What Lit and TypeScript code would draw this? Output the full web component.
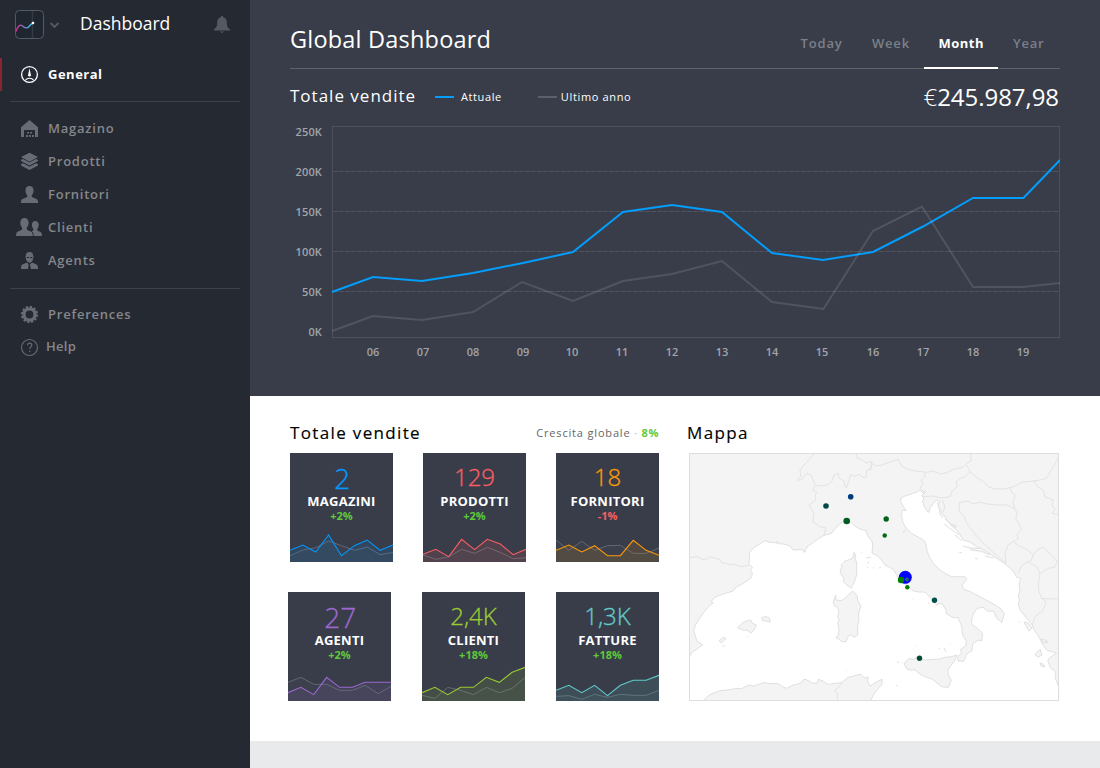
import { LitElement, html, css, svg } from "lit";
import { customElement, property } from "lit/decorators.js";

const ICONS: Record<string, unknown> = {
  general: svg`<circle cx="14.5" cy="9.5" r="7.9" fill="none" stroke="#fff" stroke-width="1.3"/>
    <path d="M14.5 3.2l1.3 6.3a1.4 1.4 0 1 1-2.6 0z" fill="#fff"/>
    <path d="M10.4 15.2c.9-1.3 2.2-2 4.1-2s3.200.7 4.100 2" fill="none" stroke="#fff" stroke-width="1.1"/>`,
  store: svg`<path d="M14.5 1L23 8.300V18H20V11H9V18H6V8.300z"/>
    <path d="M12 13h2v1.600h-2zM15 13h2v1.600h-2zM11 16h2v2h-2zM14 16h1.800v2H14zM17 16h1.800v2H17z"/>`,
  layers: svg`<path d="M14.500.8L23 5.100 14.500 9.800 6 5.100z"/>
    <path d="M6 8l2-1 6.500 3.600L21 7l2 1v1l-8.500 4.600L6 9zM6 12.200l2-1 6.500 3.500 6.500-3.500 2 1v1.200L14.500 18 6 13.400z"/>`,
  person: svg`<path d="M14.500 1c2.700 0 4.200 1.900 4 4.700-.1 2-.8 3.500-1.800 4.500v1.600c.6 1 5.200 1.700 5.900 3.300.4.900.5 1.900.5 2.900H5.900c0-1 .1-2 .5-2.900.7-1.600 5.300-2.300 5.900-3.300v-1.600c-1-1-1.700-2.500-1.800-4.500C10.300 2.900 11.800 1 14.500 1z"/>`,
  people: svg`<path d="M9.500 0c2.800 0 4.300 2 4.100 5-.1 2.100-.8 3.600-1.800 4.700v1.700c.6 1 4.800 1.700 5.500 3.400.4.900.5 2 .5 3.200H1c0-1.200.1-2.300.5-3.200.7-1.700 5-2.400 5.600-3.400V9.700c-1-1.100-1.700-2.600-1.800-4.700C5.200 2 6.700 0 9.500 0z"/>
    <path d="M20.300 3c2.300 0 3.500 1.700 3.400 4-.1 1.700-.7 3-1.500 3.900v1.400c.5.8 3.700 1.300 4.300 2.700.4.800.5 2 .5 3h-8.300c0-2.300-.3-3.700-2.100-4.700 1-.4 1.600-.7 1.800-1v-1.400c-.8-.9-1.400-2.200-1.500-3.900-.1-2.300 1.100-4 3.400-4z"/>`,
  agent: svg`<path d="M14.500 1c2.600 0 3.800 1.600 3.700 4l.4.500-.5 2c-.3 1.700-1 2.900-2 3.700l-1.600.9-1.600-.9c-1-.8-1.700-2-2-3.700l-.5-2 .4-.5C10.700 2.600 11.900 1 14.500 1z"/>
    <path d="M12 11.500l2.500 2.500 2.500-2.500c.7.700 4.900 1.500 5.600 3.200.3.900.4 2.300.4 3.300h-7l-.8-3.500h-1.400L13 18H6c0-1 .1-2.400.4-3.300.7-1.700 4.900-2.500 5.600-3.200z"/>
    <path d="M11.600 6h2.400v1.100h-2.100zM15 6h2.400l-.3 1.100H15zM13 11.300h1l.8 3.200-.8 2.500z" fill="#252932"/>`,
  gear: svg`<circle cx="14.500" cy="9.500" r="5.600" fill="none" stroke="currentColor" stroke-width="3.400"/>
    <circle cx="14.500" cy="9.500" r="7.700" fill="none" stroke="currentColor" stroke-width="1.900" stroke-dasharray="2.300 1.731"/>`,
  help: svg`<circle cx="14.500" cy="9.500" r="8" fill="none" stroke="currentColor" stroke-width="1.100"/>
    <path d="M12.600 7.300c.1-1.400.9-2.100 2.100-2.100 1.300 0 2.100.8 2.100 1.900 0 1.700-2.100 1.800-2.100 4M14.700 12.800v1.300" fill="none" stroke="currentColor" stroke-width="1.200"/>`,
};

const line = (pts: number[][]) => pts.map((p) => p.join(",")).join(" ");

@customElement("nav-item")
class NavItem extends LitElement {
  @property() icon = "";
  @property() label = "";
  @property({ type: Boolean, reflect: true }) active = false;
  static styles = css`
    :host { display: flex; align-items: center; height: 33px; padding-left: 15px; box-sizing: border-box;
      color: #86878a; font-weight: 600; font-size: 13px; letter-spacing: 0.77px; border-left: 0 solid #8a2431; }
    :host([active]) { color: #fff; border-left-width: 2px; padding-left: 13px; font-weight: 700; letter-spacing: 0.5px; }
    svg { width: 28px; height: 19px; margin-right: 5px; color: #686c76; fill: currentColor; flex: none; }
    span { line-height: 32px; margin-top: -1px; }
    :host(.tight) svg { margin: 2px 3px 0 0; }
    :host(.tight) span { letter-spacing: 0.3px; }
  `;
  render() {
    return html`<svg viewBox="0 0 28 19">${ICONS[this.icon]}</svg><span>${this.label}</span>`;
  }
}

@customElement("stat-card")
class StatCard extends LitElement {
  @property() value = "";
  @property() label = "";
  @property() delta = "";
  @property() color = "";
  @property({ attribute: false }) now: number[] = [];
  @property({ attribute: false }) before: number[] = [];
  static styles = css`
    :host { display: flex; flex-direction: column; width: 103px; height: 109px; background: #383d49; text-align: center; color: #fff; }
    .value { height: 32px; line-height: 32px; padding-top: 8px; font-size: 24px; font-weight: 300; -webkit-text-stroke: 0.3px currentColor; }
    .value.big { font-size: 28px; line-height: 34px; padding-left: 1.500px; }
    .label { height: 16px; line-height: 16px; font-size: 13px; font-weight: 700; letter-spacing: 0.25px; }
    .delta { height: 14px; line-height: 14px; font-size: 11px; font-weight: 700; color: #5fc93a; }
    .delta.down { color: #fb5f64; }
    svg { display: block; width: 103px; height: 34px; margin-top: auto; }
  `;
  render() {
    const at = (v: number[]) => v.map((h, i) => [+(i * 38.625).toFixed(1), 102 - h]);
    return html`
      <div class="value ${this.value.includes("2") && this.value.length < 3 ? "big" : ""}" style="color:${this.color}">${this.value}</div>
      <div class="label">${this.label}</div>
      <div class="delta ${this.delta.startsWith("-") ? "down" : ""}">${this.delta}</div>
      <svg viewBox="0 0 309 102">
        <polygon points="${line([[0, 102], ...at(this.before), [309, 102]])}" fill="#fff" fill-opacity="0.02"/>
        <polyline points=${line(at(this.before))} fill="none" stroke="#626772" stroke-width="3"/>
        <polygon points="${line([[0, 102], ...at(this.now), [309, 102]])}" fill=${this.color} fill-opacity="0.12"/>
        <polyline points=${line(at(this.now))} fill="none" stroke=${this.color} stroke-width="3.2"/>
      </svg>`;
  }
}

@customElement("sales-chart")
class SalesChart extends LitElement {
  static styles = css`
    :host { display: block; }
    svg { display: block; width: 770px; height: 250px; }
    text { font-size: 11px; font-weight: 600; fill: #a2a5ab; }
    .amount { letter-spacing: 0.15px; }
    .grid { stroke: #4e535e; stroke-dasharray: 5 1; }
    .frame { fill: none; stroke: #4c515c; }
    .now, .before { fill: none; stroke-width: 2; }
    .now { stroke: #039dfc; }
    .before { stroke: #fff; stroke-opacity: 0.12; }
  `;
  render() {
    const now = [[332, 292], [373, 277], [422, 281], [473, 273], [523, 263], [573, 252], [623, 212], [672, 205], [722, 212], [772, 253], [823, 260], [873, 252], [923, 226.500], [973, 198], [1023.500, 198], [1060, 160]];
    const before = [[332, 331], [373, 316], [422, 320], [473, 312], [522, 282], [573, 301], [623, 281], [672, 274], [722, 261], [772, 302], [823.500, 309], [873, 231], [922, 206.500], [973, 287], [1023, 287], [1060, 283]];
    return html`<svg viewBox="290 116 770 250">
      <rect class="frame" x="332.500" y="126.500" width="727" height="211"/>
      ${[171.5, 211.5, 251.5, 291.5].map((y) => svg`<line class="grid" x1="333" x2="1059" y1=${y} y2=${y}/>`)}
      ${["250K", "200K", "150K", "100K", "50K", "0K"].map((t, i) => svg`<text class="amount" x="322" y=${136 + i * 40} text-anchor="end">${t}</text>`)}
      ${[373, 423, 473, 523, 572, 622, 672, 722, 772, 822, 873, 923, 973, 1023].map((x, i) => svg`<text x=${x} y="356" text-anchor="middle">${String(i + 6).padStart(2, "0")}</text>`)}
      <polyline class="now" points=${line(now)}/>
      <polyline class="before" points=${line(before)}/>
    </svg>`;
  }
}

const MAINLAND = `M680 440V662L690 656 691.700 652.300 697 649 702.700 644.700 698 642 696.700 640 695 635 693.700 630 696 624 700 617.700 705 611 709.300 605.700 713.300 603 711 601.700 715 597 723 594 733.300 591 736.700 586.700 744 583 751.700 577.300 752.300 573.300 750.300 570 752.700 567.700 749 564 749.700 552.300 754 547.300 760 544 765 540.700 770 542.500 775 542.300 776.700 544 777.300 541 778.700 543.700 784 544 790 546 792 549 795 550 801 549.500 805 550.700 808 546 811.700 543.700 818 539 824 535.300 831.700 533.300 835 529 838.300 525 843.300 521.700 850.700 522.300 855 526.300 860 529 866 530.700 868.300 536.700 872 541 872.700 545 872 553.300 876 555 880 558.300 885 565 893.300 569.300 896 574 900 580 905 584 909.300 586.700 913.300 591 919 592 925 592 928 595 931 598.300 936.700 605.300 939 603 942.700 604.300 946 610 946 613.500 953.300 617.700 958.300 617.700 960 622 961.700 626.700 962.700 635 966.300 641 965.700 646 960.700 649.300 961.300 653.300 957.700 657.300 958 661 963.700 661.300 966.700 654 972 650.700 972.700 644 978.300 640 981.700 641 982.700 633.300 977 628 971.700 624.300 971.700 618.300 974 613 977.300 608.300 983.300 607.300 986.700 611 994 611.300 996.700 618.300 1001.700 622.300 1004.300 614 1001 609 996.700 606 988 601 980 596.700 971 592 963.300 589 962 585 966.700 579.300 965 576.700 951.700 576.700 945 573.300 940 570 933.300 563.300 930 558 927.300 551.700 926 545 924.300 540.700 918 537 911.700 533.300 906 528 902.700 521.700 901.500 515 902.300 510 906 510.700 903 506 900.700 501.700 901 498 905 496 913.300 493.300 917 492 920 490 923 493 925 490.500 925 493.300 921.700 495 924 499 922.500 501 924.300 506.700 927 511 929 512.300 930 508 933.300 503.300 936.700 500 940 501.700 938 506 942 513 947 520 953.300 527.300 959 533 963.300 540 970 542 976.700 546.700 984 550 991.700 555 1003.300 562.700 1008.300 566.700 1014 572 1016.700 577.300 1020.700 578.300 1019 584 1020 590 1018.300 596 1019.500 600 1018.300 603.300 1020 610 1026.700 618.300 1032.300 625 1034 630 1036.700 633.300 1040 639 1043 645 1046.700 650 1056.700 653.300 1052 656 1047.700 660 1050 667.300 1055.300 671.700 1055.300 678 1058.300 686 1065 688V440z`;

const ISLANDS = [
  "M854 552.300L855.700 555 855 558.300 856.700 563 856.700 575 854.300 582 851 588.300 847 585 843.300 581.700 844 578 841.500 575 840 570 842 567 841 565 845 561 848 560 852.700 558.300z",
  "M852.700 591L857.300 596 857.500 600 861 606 858.500 613 859 620 857.500 627 857.700 635 854.300 637.300 850.700 635 848 636.500 846 641.700 841.700 641.700 839 639 835.700 637.700 838.300 635 839 630 837.700 623.300 839.300 620 837.500 617 839 612 837.700 607.300 834.500 606 833.300 602 835.700 595 836 600 841.700 600.700 845 598 848.300 595z",
  "M904.300 664L906 661 909.300 658.300 913 659.500 916.700 657.300 920 658 925 660 930 659.700 935 659.300 940 659 945 657.300 950 657 957.300 655 955 660 950 666.700 948 670 948.300 675 951.300 680 948.300 687.300 941.700 686.700 937 683 932 679 925 676.700 920 674 915 670 910 670 906.700 669z",
  "M737.700 627.700L743.300 622.300 747 621 751 620 752 623 756.300 625 754 630 750.700 633.300 747 630 744 630.500z",
  "M762 617.700L766 616.500 769.300 618 770.300 622 766 621 762.300 620.500z",
  "M719.300 640.700L723.300 637.300 726 638.500 723 641.500 720.700 642.700z",
  "M702 702L709.300 695 714 693 720 690.700 728 690 736 688.500 741.700 688.700 748.300 685 754 686 763.300 682.700 771 683.500 778.300 683.700 783 687 786.700 688.300 793.300 685 800.700 683.300 803 680 805 679.300 809 681 811.700 682.700 817 683.500 818.300 679.300 823 681 828.300 684.500 834 683.500 841.700 682.700 848.300 677.300 854 676 860.700 674 864 678 868.300 677.300 867.500 681 870 686 877 681.500 882.300 679.300 881.700 685 877 690 873.300 695 870 702z",
  "M1024 622l4 1 4 5-3 3-3-5zM1041 639l4 1 3 2-5 1zM1037 652l3-3 2 6-4 2-3-2zM1040 663l3 1 2 3-4-1z",
  "M937 502l2 5 1 7 3 4M942 500l3 7-2 5M945 519l6 5 6 2M944 524l8 6 7 5M950 525l7 3M955 535l7 6M963 546l10 3 8-1M970 550l12 1 8 4M959 552l3 1M975 558l3 1M985 556l9 2",
  "M861 552l1 .500M866 558l5-1M867 563l2-.500M873 568l1 0M879 568l2-1M867 567l1 1M803 552l3-.500M903 532l2-2-1 2zM722 646h3M747 636.500h1M846 670.300h1M897 662l2 .500M902 662.500l1 .500M896 685l1.500 1M916 646h1M939 648.500h1M944 648l2 4M950 644h1M913 599h1M928 603l1.500.500M1019 622h1",
];

const BORDERS = [
  "M814 454L806 463 800 470 800.700 476.700 797.300 480 801 480 806.700 473.300 811 475 813 480 815 485 821 486 826.700 485 831.700 481.700 834 475 838.300 473.300 839 478 844 481 845 487 846.700 487.300 848 483 851 474.300 855 476.700 859 474 862 477 866 477.700 866.700 470 871 469 871.700 461.700 866 463 861 459 857 458.300 856 454",
  "M870 470.700L871.700 463.300 876 466 881.700 465 890 462 898.300 459.300 901.700 466 907 469 913.300 470.700 926.700 472.300 934 471 940 474 946.700 472.700 952 470 958.300 468.300 963 467 966.700 463.300 971 461 970.700 454",
  "M925 472.300L925 476 921 480 923 484 920 488 925 493M923 496.700L932 496 942 498 950 496.700 951.700 491.700 957.300 486.700 956 482 961 478 965 477 970 471.700 966.700 465",
  "M970 471.700L976 477 983.300 481.700 989 487 995 489 1003 489 1010 487.700 1015 486 1021.700 482.300 1033.300 481 1040 480 1046.700 478.300 1050 472 1053.300 466.700 1058.700 456.700",
  "M1033.300 481L1038 487 1043.300 490 1045 497 1053.300 500 1052 505 1055 510 1052 513 1059 515",
  "M1010 487.700L1012 493 1015 495 1013 503 1015 509",
  "M1005 553L1008 545 1013 541.700 1018.300 539 1017 534 1021.700 530 1019 524 1015.700 518.300 1017 513 1015 509 1007 505 996.700 505 988 504 980 502.300 973 504 968 501 959.300 502.700 959.300 511.700 964 516 966.700 523.300 975 534 983.300 543.300 994 553 1006 563.300z",
  "M1013.300 541.700L1019 546 1025 548.300 1033.300 555 1031 561 1025 563 1021.700 566 1018.300 573.300M1028.300 562.300L1036.700 566.700 1040 573.300 1038.300 583.300 1039 592 1041.700 598.300 1046 601.700 1043.300 610 1035 616.700 1032.300 625",
  "M1033.300 555L1038 549 1043.300 547.300 1049 553 1057.300 560.700 1055 567 1048.300 568.300 1040 573.300M1041.700 598.300L1050 599 1059 598.500",
  "M689 557.700L698.300 556.700 702 559 705 560 710 556.700 714 558 720 559.300 722 563 726.700 563.300 730 565 735 564 740 566.700 745 566 749 565",
  "M815 486L812.700 490 816.700 492.300 815 496 816 500 809.300 505 814 513.300 812.700 521.700 820 526.700 825.700 527.700 824 535.300",
  "M841.700 682.700L838 688 835 690 837.300 694 837.300 700",
];

@customElement("region-map")
class RegionMap extends LitElement {
  static styles = css`
    :host { display: block; box-sizing: border-box; width: 370px; height: 248px; border: 1px solid #dedede; }
    svg { display: block; width: 368px; height: 246px; }
    .land { fill: #f4f4f4; stroke: #e0e0e0; stroke-linejoin: round; }
    .border { fill: none; stroke: #e3e3e3; }
  `;
  render() {
    const pins: [number, number, number, string][] = [
      [826, 506, 2.8, "#004b46"], [850.700, 496.700, 2.800, "#003c7c"], [846.700, 521, 3.300, "#005c23"],
      [886.200, 519, 2.700, "#006214"], [884.700, 535.500, 2.200, "#006e10"], [905.300, 577.300, 6.500, "#0000ff"],
      [901, 580, 3.200, "#008000"], [907.300, 587.300, 2.200, "#007c00"], [934.500, 600.200, 2.700, "#004d4d"], [919.500, 658.200, 2.700, "#004d30"],
    ];
    return html`<svg viewBox="690 454 368 246">
      <path class="land" d=${MAINLAND}/>
      ${ISLANDS.map((d) => svg`<path class="land" d=${d}/>`)}
      ${BORDERS.map((d) => svg`<path class="border" d=${d}/>`)}
      ${pins.map(([x, y, r, c]) => svg`<circle cx=${x} cy=${y} r=${r} fill=${c}/>`)}
      <circle cx="907" cy="579.500" r="1.500" fill="#084c8c" stroke="#3c8c50" stroke-width="0.800"/>
    </svg>`;
  }
}

const CARDS = [
  [
    { v: "2", l: "MAGAZINI", d: "+2%", c: "#0398fc", now: [35, 51, 30, 81, 19, 49, 66, 35, 51], before: [19, 36, 43, 63, 49, 35, 45, 22, 29] },
    { v: "129", l: "PRODOTTI", d: "+2%", c: "#fb5f64", now: [23, 38, 16, 68, 37, 68, 54, 22, 38], before: [21, 8, 16, 38, 26, 44, 29, 10, 13] },
    { v: "18", l: "FORNITORI", d: "-1%", c: "#fc9a06", now: [35, 51, 30, 49, 19, 19, 65, 35, 20], before: [66, 35, 62, 35, 49, 50, 26, 26, 42] },
  ],
  [
    { v: "27", l: "AGENTI", d: "+2%", c: "#9c68d0", now: [25, 41, 19, 71, 41, 41, 56, 56, 56], before: [56, 71, 50, 50, 32, 32, 47, 22, 44] },
    { v: "2,4K", l: "CLIENTI", d: "+18%", c: "#9acb34", now: [25, 41, 19, 41, 41, 71, 56, 86, 101], before: [17, 8, 41, 32, 19, 41, 25, 38, 71] },
    { v: "1,3K", l: "FATTURE", d: "+18%", c: "#62cbcb", now: [32, 47, 25, 47, 16, 47, 62, 62, 77], before: [14, 16, 5, 20, 11, 20, 17, 17, 32] },
  ],
];

@customElement("app-root")
class AppRoot extends LitElement {
  static styles = css`
    :host { display: flex; width: 1100px; height: 768px; overflow: hidden; font-family: "Open Sans", sans-serif; color: #fff; background: #e9eaec; }
    h1, h2 { margin: 0; font-weight: 400; }
    aside { width: 250px; background: #252932; flex: none; }
    .brand { display: flex; align-items: center; height: 48px; padding: 0 20px 0 14px; margin-bottom: 10px; }
    .logo { width: 30px; height: 30px; }
    .chev { width: 11px; height: 7px; margin: 3px 20px 0 5px; }
    .name { flex: 1; font-size: 17.5px; line-height: 46px; margin-top: -3px; letter-spacing: 0; }
    .bell { width: 16px; height: 18px; margin-top: 1px; }
    .rule { height: 1px; margin: 10px; background: #3c414b; }
    .rule.second { margin: 11px 10px 9px; }
    nav-item.tight { margin-top: -1px; }
    main { flex: 1; display: flex; flex-direction: column; }
    .sales { height: 396px; box-sizing: border-box; padding: 0 40px; background: #383d49; }
    header { display: flex; justify-content: space-between; height: 69px; box-sizing: border-box; box-shadow: inset 0 -1px #5d626c; }
    h1 { padding-top: 10px; font-size: 23.5px; line-height: 58px; letter-spacing: 0.2px; }
    .tabs { display: flex; padding-top: 20px; }
    .tab { box-sizing: border-box; height: 49px; line-height: 46px; padding: 0 14.500px 0 15px; font-size: 13px; font-weight: 600; letter-spacing: 0.8px; color: #7c8088; }
    .tab:last-child { padding-right: 15.500px; }
    .tab.on { color: #fff; font-weight: 700; border-bottom: 2px solid #fff; padding: 0 14px; letter-spacing: 0.5px; }
    .sub { display: flex; align-items: center; height: 47px; font-size: 11px; }
    h2 { font-size: 17px; letter-spacing: 1px; }
    .sub h2 { width: 145px; line-height: 38px; margin-top: 7px; }
    .key { display: flex; align-items: center; margin-top: 7px; letter-spacing: 0.6px; }
    .key i { width: 19px; height: 2px; background: #039dfc; margin: 1px 7px 0 0; }
    .key.old { margin-left: 36px; letter-spacing: 0.65px; }
    .key.old i { background: #5b606b; margin-right: 4px; }
    .total { margin-left: auto; font-size: 24px; line-height: 40px; margin-top: 9px; padding-right: 1px; letter-spacing: -0.05px; }
    .total span { font-weight: 300; }
    .panels { display: flex; height: 345px; padding: 0 40px; background: #fff; color: #000; box-sizing: border-box; gap: 28px; }
    .panels h2 { letter-spacing: 1.35px; -webkit-text-stroke: 0.15px #000; }
    .stats { width: 369px; }
    .head { display: flex; justify-content: space-between; height: 57px; line-height: 74px; }
    .growth { font-size: 11px; color: #666; letter-spacing: 0.83px; }
    .growth b { color: #5fc93a; letter-spacing: 0.6px; }
    .growth i { color: #b5b5b5; font-style: normal; }
    .cards { display: flex; gap: 30px; }
    .cards + .cards { margin: 30px 0 0 -2px; gap: 31px; }
    region-map { margin-left: 2px; }
  `;
  render() {
    return html`
      <aside>
        <div class="brand">
          <svg class="logo" viewBox="0 0 30 30">
            <defs><linearGradient id="trend"><stop offset="0" stop-color="#e02f9c"/><stop offset="0.500" stop-color="#7c7fc4"/><stop offset="1" stop-color="#28d8f4"/></linearGradient></defs>
            <rect x="1.500" y="1.500" width="28" height="28" rx="4" fill="#202630" stroke="#555962"/>
            <path d="M18.500 2v27" stroke="#343943" stroke-width="1.500"/>
            <path d="M2 22.500c1.500-5 4-8 6.500-5.500s5 2.500 6.500.500 2.500-2.500 4-3.500" fill="none" stroke="url(#trend)" stroke-width="1.300"/>
            <circle cx="19" cy="14" r="1.300" fill="#fff"/>
          </svg>
          <svg class="chev" viewBox="0 0 11 7"><path d="M1.500 1l4 4 4-4" fill="none" stroke="#575b65" stroke-width="1.800"/></svg>
          <div class="name">Dashboard</div>
          <svg class="bell" viewBox="0 0 16 18" fill="#555963"><path d="M8 0c.8 0 1.200.5 1.200 1.200 2.400.6 3.600 2.300 3.600 5 0 4 .7 5.500 3.200 7V14.500H0v-1.300c2.500-1.500 3.200-3 3.200-7 0-2.700 1.200-4.400 3.600-5C6.800.5 7.200 0 8 0zM5.700 15.500h4.600L8 17z"/></svg>
        </div>
        <nav-item icon="general" label="General" active></nav-item>
        <div class="rule"></div>
        <nav-item icon="store" label="Magazino"></nav-item>
        <nav-item icon="layers" label="Prodotti"></nav-item>
        <nav-item icon="person" label="Fornitori"></nav-item>
        <nav-item icon="people" label="Clienti"></nav-item>
        <nav-item icon="agent" label="Agents"></nav-item>
        <div class="rule second"></div>
        <nav-item icon="gear" label="Preferences"></nav-item>
        <nav-item class="tight" icon="help" label="Help"></nav-item>
      </aside>
      <main>
        <section class="sales">
          <header>
            <h1>Global Dashboard</h1>
            <div class="tabs">${["Today", "Week", "Month", "Year"].map((t) => html`<div class="tab ${t === "Month" ? "on" : ""}">${t}</div>`)}</div>
          </header>
          <div class="sub">
            <h2>Totale vendite</h2>
            <div class="key"><i></i>Attuale</div>
            <div class="key old"><i></i>Ultimo anno</div>
            <div class="total"><span>€</span>245.987,98</div>
          </div>
          <sales-chart></sales-chart>
        </section>
        <section class="panels">
          <div class="stats">
            <div class="head"><h2>Totale vendite</h2><div class="growth">Crescita globale <i>·</i> <b>8%</b></div></div>
            ${CARDS.map((row) => html`<div class="cards">${row.map((k) => html`<stat-card .value=${k.v} .label=${k.l} .delta=${k.d} .color=${k.c} .now=${k.now} .before=${k.before}></stat-card>`)}</div>`)}
          </div>
          <div>
            <div class="head"><h2>Mappa</h2></div>
            <region-map></region-map>
          </div>
        </section>
      </main>`;
  }
}
